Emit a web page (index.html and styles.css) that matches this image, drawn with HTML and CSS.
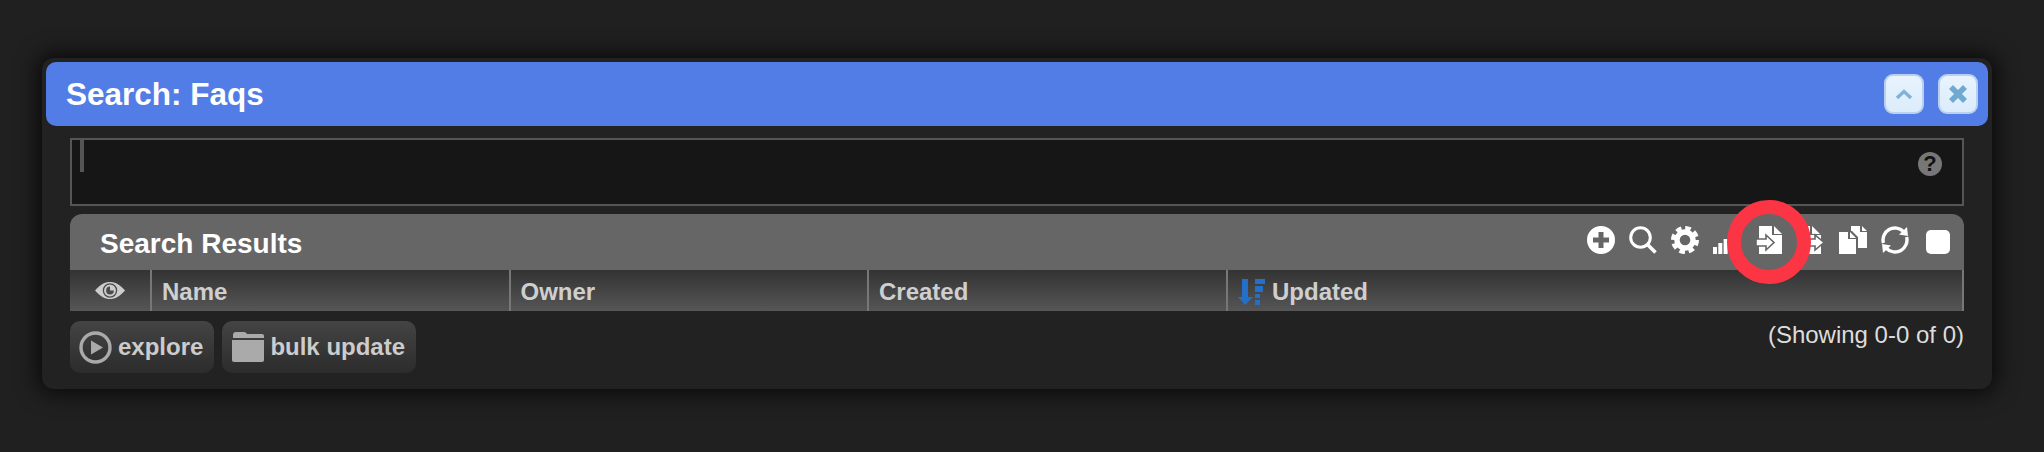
FILE: index.html
```html
<!DOCTYPE html>
<html lang="en">
<head>
    <meta charset="UTF-8">
    <meta name="viewport" content="width=device-width, initial-scale=1.0">
    <title>Search: Faqs</title>
    <link rel="stylesheet" href="styles.css">
</head>
<body>
    <div class="window">
        <div class="titlebar">
            <span class="title">Search: Faqs</span>
            <div class="win_buttons">
                <button class="win_btn">
                    <svg width="18" height="12" viewBox="0 0 18 12"><path d="M2 10 L9 3.5 L16 10" fill="none" stroke="#7fb3d8" stroke-width="3.4"/></svg>
                </button>
                <button class="win_btn">
                    <svg width="20" height="20" viewBox="0 0 20 20"><path d="M3 3 L17 17 M17 3 L3 17" fill="none" stroke="#6fa9d2" stroke-width="5.6"/></svg>
                </button>
            </div>
        </div>
        <div class="content">
            <div class="search_box">
                <div class="cursor"></div>
                <div class="help">?</div>
            </div>
            <div class="results_head">
                <span class="results_title">Search Results</span>
                <div class="tools">
                    <svg class="tool" width="28" height="28" viewBox="0 0 28 28"><path fill-rule="evenodd" fill="#fff" d="M14 0 A14 14 0 1 0 14 28 A14 14 0 1 0 14 0 Z M11.5 6 H16.5 V11.5 H22 V16.5 H16.5 V22 H11.5 V16.5 H6 V11.5 H11.5 Z"/></svg>
                    <svg class="tool" width="28" height="28" viewBox="0 0 28 28"><circle cx="11.5" cy="11.5" r="9.8" fill="none" stroke="#fff" stroke-width="3"/><path d="M18.5 18.5 L26.5 26.5" stroke="#fff" stroke-width="3.6"/></svg>
                    <svg class="tool" width="28" height="28" viewBox="0 0 28 28"><circle cx="14" cy="14" r="8" fill="none" stroke="#fff" stroke-width="5.4"/><circle cx="14" cy="14" r="12" fill="none" stroke="#fff" stroke-width="4" stroke-dasharray="5.6 3.8"/></svg>
                    <svg class="tool" width="28" height="28" viewBox="0 0 28 28"><rect x="0" y="21" width="4" height="7" fill="#fff"/><rect x="5.3" y="17" width="4" height="11" fill="#fff"/><rect x="10.6" y="13" width="4" height="15" fill="#fff"/><rect x="16" y="9" width="4" height="19" fill="#fff"/></svg>
                    <svg class="tool" width="28" height="28" viewBox="0 0 28 28"><path d="M4 0 H17 V9 H27 V28 H4 Z M19 0 L27 8 H19 Z" fill="#fff"/><path d="M1 13 H11 V9 L19 16.5 L11 24 V20 H1 Z" fill="#fff" stroke="#666" stroke-width="1.6"/></svg>
                    <svg class="tool" width="28" height="28" viewBox="0 0 28 28"><path d="M0 0 H13 V9 H24 V28 H0 Z M15 0 L23 8 H15 Z" fill="#fff"/><path d="M9 13 H18 V9 L27 16.5 L18 24 V20 H9 Z" fill="#fff" stroke="#666" stroke-width="1.6"/></svg>
                    <svg class="tool" width="28" height="28" viewBox="0 0 28 28"><path d="M12 0 H21 V6 H28 V22 H19 V11 L13 5 H12 Z M23 0 L28 5 H23 Z" fill="#fff"/><path d="M0 6 H9 V13 H17 V28 H0 Z M11 6 L17 12 H11 Z" fill="#fff"/></svg>
                    <svg class="tool" width="28" height="28" viewBox="0 0 28 28"><path d="M2.4 17 A12 12 0 0 1 22.5 5.5" fill="none" stroke="#fff" stroke-width="3.4"/><path d="M25.6 11 A12 12 0 0 1 5.5 22.5" fill="none" stroke="#fff" stroke-width="3.4"/><path d="M18 8.5 L27 10 L26 1 Z" fill="#fff"/><path d="M10 19.5 L1 18 L2 27 Z" fill="#fff"/></svg>
                    <div class="check"></div>
                </div>
            </div>
            <div class="table_head">
                <div class="th th_eye">
                    <svg width="30" height="17" viewBox="0 0 30 17"><path fill="#ccc" d="M0 8.5 C5 2.5 10 0 15 0 C20 0 25 2.5 30 8.5 C25 14.5 20 17 15 17 C10 17 5 14.5 0 8.5 Z"/><circle cx="15" cy="8.5" r="6.6" fill="none" stroke="#4a4a4a" stroke-width="1.3"/><path d="M15 4.6 A3.9 3.9 0 1 0 18.9 8.5 L15 8.5 Z" fill="#4a4a4a"/></svg>
                </div>
                <div class="th">Name</div>
                <div class="th">Owner</div>
                <div class="th">Created</div>
                <div class="th th_updated">
                    <svg width="27" height="26" viewBox="0 0 27 26"><path d="M4 0 H10 V18 H15 L7 26 L0 18 H4 Z" fill="#2470c9"/><rect x="17" y="0" width="10" height="5" fill="#2470c9"/><rect x="17" y="7" width="8" height="6" fill="#2470c9"/><rect x="17" y="15" width="5" height="4" fill="#2470c9"/><rect x="17" y="21" width="5" height="5" fill="#2470c9"/></svg>
                    Updated
                </div>
            </div>
            <div class="bottom_row">
                <div class="actions">
                    <button class="action">
                        <svg width="33" height="33" viewBox="0 0 33 33"><circle cx="16.5" cy="16.5" r="14.5" fill="none" stroke="#aaa" stroke-width="3.4"/><path d="M12 9.5 L24 16.5 L12 23.5 Z" fill="#aaa"/></svg>
                        explore
                    </button>
                    <button class="action">
                        <svg width="33" height="30" viewBox="0 0 33 30"><path d="M2 3 Q2 0 5 0 H13 Q15 0 16 2 H31 Q33 2 33 4 V6 H2 Z" fill="#aaa"/><path d="M1 8 H33 V28 Q33 30 31 30 H3 Q1 30 1 28 Z" fill="#aaa"/></svg>
                        bulk update
                    </button>
                </div>
                <span class="showing">(Showing 0-0 of 0)</span>
            </div>
        </div>
    </div>
    <div class="ring"></div>
</body>
</html>
```

FILE: styles.css
```css
body
{
    margin: 0;
    height: 452px;
    overflow: hidden;
    background-color: #202020;
    font-family: "Liberation Sans", Arial, sans-serif;
    padding: 58px 0 0 42px;
    box-sizing: border-box;
}
.window
{
    width: 1950px;
    height: 331px;
    box-sizing: border-box;
    padding: 4px;
    background: #222222;
    border-radius: 12px;
    box-shadow: 0 0 22px 4px rgba(0, 0, 0, 0.75);
}
.titlebar
{
    height: 64px;
    display: flex;
    align-items: center;
    justify-content: space-between;
    background: #537de6;
    border-radius: 10px;
    padding: 0 10px 0 20px;
}
.title
{
    color: white;
    font-size: 31.5px;
    font-weight: bold;
}
.win_buttons
{
    display: flex;
    gap: 14px;
}
.win_btn
{
    width: 40px;
    height: 40px;
    padding: 0;
    display: flex;
    align-items: center;
    justify-content: center;
    background: linear-gradient(#e8f3fd, #dcecfb);
    border: 2px solid #b9d0f0;
    border-radius: 9px;
}
.content
{
    padding: 12px 24px 0;
}
.search_box
{
    height: 68px;
    box-sizing: border-box;
    background: #161616;
    border: 2px solid #555555;
    padding: 0 20px 0 8px;
    display: flex;
    justify-content: space-between;
}
.cursor
{
    width: 4px;
    height: 32px;
    background: #555555;
}
.help
{
    width: 24px;
    height: 24px;
    margin-top: 12px;
    border-radius: 50%;
    background: #777777;
    color: #111111;
    font-size: 22px;
    font-weight: bold;
    line-height: 24px;
    text-align: center;
}
.results_head
{
    margin-top: 8px;
    height: 56px;
    box-sizing: border-box;
    background: #666666;
    border-radius: 12px 12px 0 0;
    display: flex;
    align-items: center;
    justify-content: space-between;
    padding: 0 14px 0 30px;
}
.results_title
{
    color: white;
    font-size: 28px;
    font-weight: bold;
    margin-top: 3px;
}
.tools
{
    display: flex;
    align-items: flex-start;
    padding-bottom: 4px;
}
.tool
{
    margin-right: 14px;
}
.check
{
    width: 24px;
    height: 24px;
    margin-left: 3px;
    margin-top: 4px;
    background: #ffffff;
    border-radius: 5px;
}
.table_head
{
    height: 41px;
    display: grid;
    grid-template-columns: 82px 358.5px 358.5px 359px 1fr;
    background: linear-gradient(#333333, #565656);
}
.th
{
    display: flex;
    align-items: center;
    gap: 7px;
    padding: 2px 0 0 10px;
    box-sizing: border-box;
    color: #cfcfcf;
    font-size: 24px;
    font-weight: bold;
    border-right: 2px solid #777777;
}
.th_eye
{
    justify-content: center;
    padding: 0;
}
.bottom_row
{
    display: flex;
    justify-content: space-between;
    margin-top: 10px;
}
.actions
{
    display: flex;
    gap: 8px;
}
.action
{
    height: 52px;
    display: flex;
    align-items: center;
    gap: 6px;
    padding: 0 11px 0 9px;
    border: none;
    border-radius: 10px;
    background: linear-gradient(#444444, #2c2c2c);
    color: #cccccc;
    font-family: "Liberation Sans", Arial, sans-serif;
    font-size: 24px;
    font-weight: bold;
}
.showing
{
    color: #dddddd;
    font-size: 24px;
}
.ring
{
    position: absolute;
    left: 1727px;
    top: 200px;
    width: 84px;
    height: 84px;
    box-sizing: border-box;
    border: 14px solid #fc3545;
    border-radius: 50%;
}
```
